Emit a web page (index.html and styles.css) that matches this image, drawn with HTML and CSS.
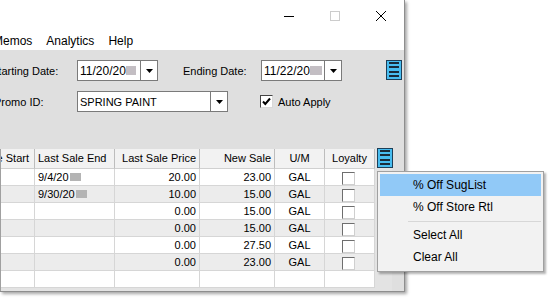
FILE: index.html
```html
<!DOCTYPE html>
<html lang="en">
<head>
  <meta charset="UTF-8" />
  <title>Promo Pricing</title>
  <link rel="stylesheet" href="styles.css">
</head>
<body>
  <div class="window">
    <div class="titlebar">
      <div class="caption-btn">
        <svg width="10" height="10" viewBox="0 0 10 10"><path d="M0 5.5H10" stroke="#000" stroke-width="1"/></svg>
      </div>
      <div class="caption-btn">
        <svg width="10" height="10" viewBox="0 0 10 10"><rect x="0.5" y="0.5" width="9" height="9" fill="none" stroke="#cccccc"/></svg>
      </div>
      <div class="caption-btn">
        <svg width="10" height="10" viewBox="0 0 10 10"><path d="M0 0L10 10M10 0L0 10" stroke="#000" stroke-width="1"/></svg>
      </div>
    </div>

    <div class="menubar">
      <span class="menu-item">Memos</span>
      <span class="menu-item">Analytics</span>
      <span class="menu-item">Help</span>
    </div>

    <div class="form">
      <div class="filter-row">
        <label class="field-label start-label">Starting Date:</label>
        <div class="datebox">
          <div class="box-value">11/20/20<span class="redact"></span></div>
          <div class="box-drop"><svg width="7" height="4" viewBox="0 0 7 4"><polygon points="0,0 7,0 3.5,4" fill="#000"/></svg></div>
        </div>
        <label class="field-label end-label">Ending Date:</label>
        <div class="datebox">
          <div class="box-value">11/22/20<span class="redact wide"></span></div>
          <div class="box-drop"><svg width="7" height="4" viewBox="0 0 7 4"><polygon points="0,0 7,0 3.5,4" fill="#000"/></svg></div>
        </div>
        <div class="list-btn top-btn">
          <svg width="16" height="20" viewBox="0 0 16 20">
            <rect x="0.5" y="0.5" width="15" height="19" fill="#48bdf0" stroke="#1d3f58"/>
            <rect x="3" y="2" width="10" height="2" fill="#1a2b3a"/>
            <rect x="3" y="6" width="10" height="2" fill="#1a2b3a"/>
            <rect x="3" y="11" width="10" height="2" fill="#1a2b3a"/>
            <rect x="3" y="15" width="10" height="2" fill="#1a2b3a"/>
          </svg>
        </div>
      </div>

      <div class="filter-row">
        <label class="field-label promo-label">Promo ID:</label>
        <div class="combobox">
          <div class="box-value combo-value">SPRING PAINT</div>
          <div class="box-drop"><svg width="7" height="4" viewBox="0 0 7 4"><polygon points="0,0 7,0 3.5,4" fill="#000"/></svg></div>
        </div>
        <div class="checkbox checked">
          <svg width="11" height="11" viewBox="0 0 11 11"><path d="M2 5.5L4.3 8L9 2.5" fill="none" stroke="#000" stroke-width="2"/></svg>
        </div>
        <span class="check-label">Auto Apply</span>
      </div>

      <div class="grid-area">
        <div class="grid">
          <table class="grid-table">
            <colgroup>
              <col class="col-start">
              <col class="col-end">
              <col class="col-price">
              <col class="col-new">
              <col class="col-um">
              <col class="col-loyal">
            </colgroup>
            <thead>
              <tr>
                <th class="right"><div class="clip">Last Sale Start</div></th>
                <th class="left">Last Sale End</th>
                <th class="right">Last Sale Price</th>
                <th class="right">New Sale</th>
                <th class="center">U/M</th>
                <th class="center">Loyalty</th>
              </tr>
            </thead>
            <tbody>
              <tr>
                <td></td>
                <td class="left">9/4/20<span class="redact cell-redact"></span></td>
                <td class="right">20.00</td>
                <td class="right">23.00</td>
                <td class="center">GAL</td>
                <td class="center"><span class="cell-check"></span></td>
              </tr>
              <tr class="alt">
                <td></td>
                <td class="left">9/30/20<span class="redact cell-redact"></span></td>
                <td class="right">10.00</td>
                <td class="right">15.00</td>
                <td class="center">GAL</td>
                <td class="center"><span class="cell-check"></span></td>
              </tr>
              <tr>
                <td></td>
                <td></td>
                <td class="right">0.00</td>
                <td class="right">15.00</td>
                <td class="center">GAL</td>
                <td class="center"><span class="cell-check"></span></td>
              </tr>
              <tr class="alt">
                <td></td>
                <td></td>
                <td class="right">0.00</td>
                <td class="right">15.00</td>
                <td class="center">GAL</td>
                <td class="center"><span class="cell-check"></span></td>
              </tr>
              <tr>
                <td></td>
                <td></td>
                <td class="right">0.00</td>
                <td class="right">27.50</td>
                <td class="center">GAL</td>
                <td class="center"><span class="cell-check"></span></td>
              </tr>
              <tr class="alt">
                <td></td>
                <td></td>
                <td class="right">0.00</td>
                <td class="right">23.00</td>
                <td class="center">GAL</td>
                <td class="center"><span class="cell-check"></span></td>
              </tr>
              <tr>
                <td></td>
                <td></td>
                <td></td>
                <td></td>
                <td></td>
                <td></td>
              </tr>
            </tbody>
          </table>
          <div class="list-btn grid-btn">
            <svg width="16" height="20" viewBox="0 0 16 20">
              <rect x="0.5" y="0.5" width="15" height="19" fill="#48bdf0" stroke="#1d3f58"/>
              <rect x="3" y="2" width="10" height="2" fill="#1a2b3a"/>
              <rect x="3" y="6" width="10" height="2" fill="#1a2b3a"/>
              <rect x="3" y="11" width="10" height="2" fill="#1a2b3a"/>
              <rect x="3" y="15" width="10" height="2" fill="#1a2b3a"/>
            </svg>
          </div>
        </div>
      </div>
    </div>
  </div>

  <div class="context-menu">
    <div class="ctx-item active">% Off SugList</div>
    <div class="ctx-item">% Off Store Rtl</div>
    <div class="ctx-sep"></div>
    <div class="ctx-item">Select All</div>
    <div class="ctx-item">Clear All</div>
  </div>
</body>
</html>
```

FILE: styles.css
```css
* {
  box-sizing: border-box;
  margin: 0;
  padding: 0;
}

body {
  font-family: "Liberation Sans", Arial, sans-serif;
  background-color: #fff;
  color: #000;
  width: 551px;
  height: 299px;
  overflow: hidden;
  position: relative;
}

.window {
  width: 405px;
  height: 292px;
  display: flex;
  flex-direction: column;
  background: #dfdfdf;
  border-right: 1px solid #8e8e8e;
  border-bottom: 1px solid #8e8e8e;
  box-shadow: 2px 2px 3px rgba(0, 0, 0, 0.35);
  overflow: hidden;
}

/* title bar */

.titlebar {
  height: 32px;
  background: #fff;
  display: flex;
  justify-content: flex-end;
}

.caption-btn {
  width: 46px;
  height: 32px;
  display: flex;
  align-items: center;
  justify-content: center;
}

.caption-btn svg {
  display: block;
}

.menubar {
  height: 18px;
  background: #fff;
  display: flex;
  margin-left: -14px;
  font-size: 12px;
  line-height: 18px;
}

.menu-item {
  padding: 0 7px;
}

/* filters */

.form {
  flex: 1;
  display: flex;
  flex-direction: column;
  padding-top: 10px;
}

.filter-row {
  display: flex;
  align-items: center;
  height: 21px;
  font-size: 11px;
}

.filter-row + .filter-row {
  margin-top: 10px;
}

.field-label {
  white-space: nowrap;
  flex-shrink: 0;
}

.start-label {
  margin-left: -9px;
  width: 86px;
}

.end-label {
  margin-left: 25px;
  width: 78px;
}

.promo-label {
  margin-left: -6px;
  width: 83px;
}

.datebox,
.combobox {
  height: 21px;
  display: flex;
  background: #fff;
  border: 1px solid #7a7a7a;
  flex-shrink: 0;
}

.datebox {
  width: 81px;
}

.combobox {
  width: 151px;
}

.box-value {
  flex: 1;
  display: flex;
  align-items: center;
  padding-left: 2px;
  font-size: 12px;
  white-space: nowrap;
}

.combo-value {
  font-size: 11px;
}

.box-drop {
  width: 17px;
  border-left: 1px solid #7a7a7a;
  display: flex;
  align-items: center;
  justify-content: center;
}

.box-drop svg {
  display: block;
}

.redact {
  display: inline-block;
  width: 10px;
  height: 9px;
  background: #c3bec3;
}

.redact.wide {
  width: 12px;
}

.list-btn svg {
  display: block;
}

.top-btn {
  margin-left: auto;
  margin-right: 2px;
  margin-top: -1px;
}

.checkbox {
  width: 13px;
  height: 13px;
  margin-left: 32px;
  background: #fff;
  border: 1px solid;
  border-color: #444 #d8d8d8 #d8d8d8 #444;
}

.checkbox svg {
  display: block;
}

.check-label {
  margin-left: 5px;
  font-size: 11px;
  white-space: nowrap;
}

/* grid */

.grid-area {
  flex: 1;
  margin-top: 37px;
  display: flex;
}

.grid {
  width: 392px;
  display: flex;
  align-items: flex-start;
  gap: 2px;
  background: #e3e3e3;
  border-left: 1px solid #a0a0a0;
}

.grid-table {
  width: 374px;
  table-layout: fixed;
  border-collapse: separate;
  border-spacing: 0;
  font-size: 11px;
}

.col-start { width: 34px; }
.col-end { width: 80px; }
.col-price { width: 85px; }
.col-new { width: 75px; }
.col-um { width: 50px; }
.col-loyal { width: 50px; }

.grid-table th {
  font-weight: normal;
  line-height: 19px;
  background: #f2f2f2;
  border-right: 1px solid #bdbdbd;
  border-bottom: 1px solid #d0d0d0;
  white-space: nowrap;
  overflow: hidden;
}

.grid-table td {
  line-height: 16px;
  height: 17px;
  background: #fff;
  border-right: 1px solid #d6d6d6;
  border-bottom: 1px solid #d6d6d6;
  white-space: nowrap;
  overflow: hidden;
}

.grid-table tr.alt td {
  background: #ececec;
}

.grid-table .left {
  text-align: left;
  padding-left: 3px;
}

.grid-table .right {
  text-align: right;
  padding-right: 3px;
}

.grid-table .center {
  text-align: center;
}

.clip {
  display: flex;
  justify-content: flex-end;
  padding-right: 2px;
}

.cell-redact {
  width: 11px;
  height: 8px;
  margin-left: 1px;
  background: #b4b4b4;
}

.cell-check {
  display: inline-block;
  width: 13px;
  height: 13px;
  vertical-align: middle;
  margin-left: -3px;
  background: #fff;
  border: 1px solid;
  border-color: #6e6e6e #cfcfcf #cfcfcf #6e6e6e;
}

.grid-btn {
  margin-top: -1px;
}

/* context menu */

.context-menu {
  position: absolute;
  left: 377px;
  top: 171px;
  width: 167px;
  padding: 2px 2px 3px;
  background: #f2f2f2;
  border: 1px solid #a0a0a0;
  box-shadow: 2px 2px 2px rgba(0, 0, 0, 0.3);
  font-size: 12px;
}

.ctx-item {
  height: 22px;
  line-height: 22px;
  padding-left: 33px;
  white-space: nowrap;
}

.ctx-item.active {
  background: #91c9f7;
}

.ctx-sep {
  height: 1px;
  margin: 3px 0 2px 28px;
  background: #d7d7d7;
}
```
